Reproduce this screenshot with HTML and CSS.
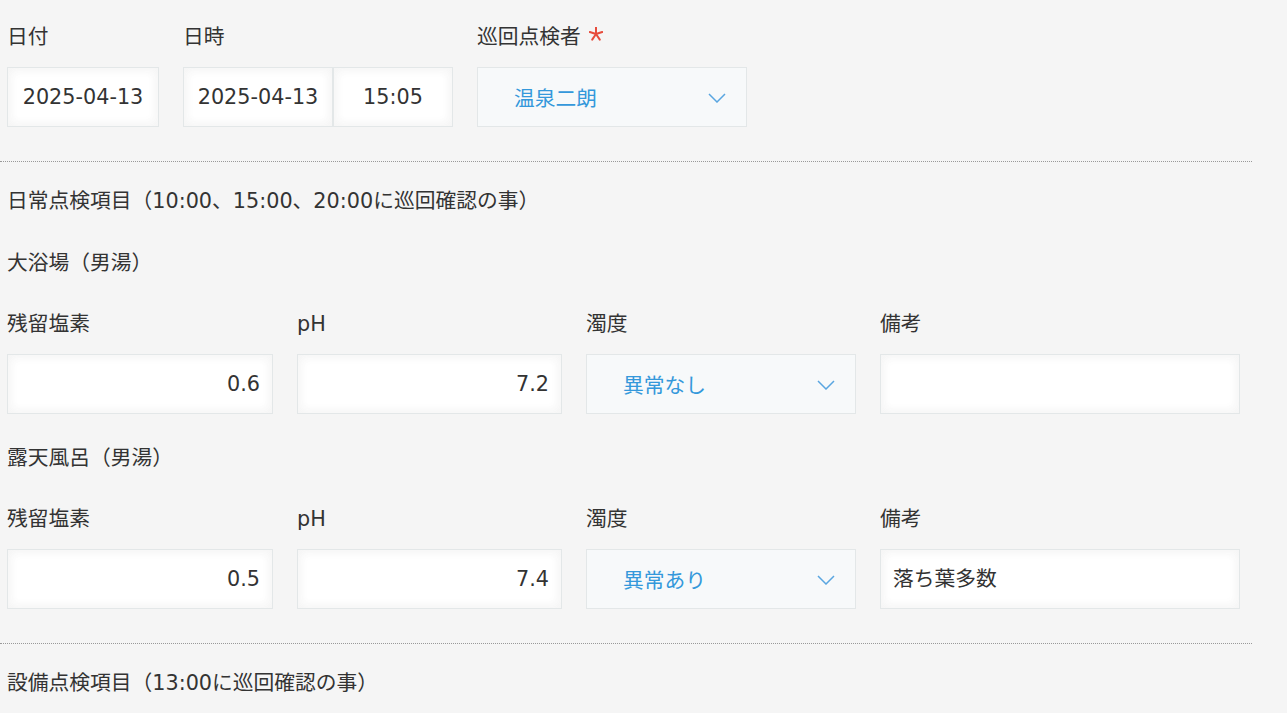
FILE: index.html
```html
<!DOCTYPE html>
<html lang="ja">

<head>
  <meta charset="UTF-8">
  <meta name="viewport" content="width=device-width, initial-scale=1.0">
  <title>巡回点検</title>
  <link rel="stylesheet" href="styles.css">
</head>

<body>
  <div class="form">

    <div class="row row--top">
      <div class="field">
        <div class="label">日付</div>
        <div class="input input--date input--center">2025-04-13</div>
      </div>
      <div class="field">
        <div class="label">日時</div>
        <div class="datetime">
          <div class="input input--date2 input--center">2025-04-13</div>
          <div class="input input--time input--center">15:05</div>
        </div>
      </div>
      <div class="field">
        <div class="label">巡回点検者 <span class="required"><svg width="14" height="14" viewBox="0 0 14 14"><g stroke="#e74c3c" stroke-width="2" stroke-linecap="round"><line x1="7" y1="7" x2="7" y2="0.5"/><line x1="7" y1="7" x2="13.2" y2="5"/><line x1="7" y1="7" x2="0.8" y2="5"/><line x1="7" y1="7" x2="10.8" y2="12.6"/><line x1="7" y1="7" x2="3.2" y2="12.6"/></g></svg></span></div>
        <div class="select">
          <span class="select__text">温泉二朗</span>
          <svg class="select__arrow" width="18" height="10" viewBox="0 0 18 10"><polyline points="1,1 9,9 17,1" fill="none" stroke="#5aa6e0" stroke-width="1.5"/></svg>
        </div>
      </div>
    </div>

    <hr class="rule">

    <div class="group-title">日常点検項目（10:00、15:00、20:00に巡回確認の事）</div>

    <div class="sub-title">大浴場（男湯）</div>
    <div class="row">
      <div class="field">
        <div class="label">残留塩素</div>
        <div class="input input--num">0.6</div>
      </div>
      <div class="field">
        <div class="label">pH</div>
        <div class="input input--num input--ph">7.2</div>
      </div>
      <div class="field">
        <div class="label">濁度</div>
        <div class="select">
          <span class="select__text">異常なし</span>
          <svg class="select__arrow" width="18" height="10" viewBox="0 0 18 10"><polyline points="1,1 9,9 17,1" fill="none" stroke="#5aa6e0" stroke-width="1.5"/></svg>
        </div>
      </div>
      <div class="field">
        <div class="label">備考</div>
        <div class="input input--note"></div>
      </div>
    </div>

    <div class="sub-title sub-title--second">露天風呂（男湯）</div>
    <div class="row">
      <div class="field">
        <div class="label">残留塩素</div>
        <div class="input input--num">0.5</div>
      </div>
      <div class="field">
        <div class="label">pH</div>
        <div class="input input--num input--ph">7.4</div>
      </div>
      <div class="field">
        <div class="label">濁度</div>
        <div class="select">
          <span class="select__text">異常あり</span>
          <svg class="select__arrow" width="18" height="10" viewBox="0 0 18 10"><polyline points="1,1 9,9 17,1" fill="none" stroke="#5aa6e0" stroke-width="1.5"/></svg>
        </div>
      </div>
      <div class="field">
        <div class="label">備考</div>
        <div class="input input--note">落ち葉多数</div>
      </div>
    </div>

    <hr class="rule">

    <div class="group-title">設備点検項目（13:00に巡回確認の事）</div>

  </div>
</body>

</html>
```

FILE: styles.css
```css
body {
  margin: 0;
  background-color: #f5f5f5;
  color: #333;
  font-family: "DejaVu Sans", "Noto Sans CJK JP", sans-serif;
  font-size: 20.75px;
}

.form {
  padding-top: 23px;
}

/* 1行分のフィールド */
.row {
  display: flex;
  gap: 24px;
  padding-left: 7px;
  margin-top: 33px;
}

.row--top {
  margin-top: 0;
}

.field {
  display: flex;
  flex-direction: column;
}

.label {
  display: flex;
  align-items: center;
  height: 28px;
  line-height: 28px;
  margin-bottom: 16px;
}

.required {
  display: inline-flex;
  margin-left: 8px;
  margin-top: -7px;
}

/* 入力欄 */
.input {
  box-sizing: border-box;
  height: 60px;
  line-height: 58px;
  padding: 0 12px;
  background-color: #fff;
  border: 1px solid #e3e7e8;
  box-shadow: 1px 1px 12px #f5f5f5 inset, -1px -1px 12px #f5f5f5 inset;
  white-space: nowrap;
}

.input--center {
  text-align: center;
  padding: 0;
}

.input--date {
  width: 152px;
}

.datetime {
  display: flex;
}

.input--date2 {
  width: 150px;
}

.input--time {
  width: 120px;
}

.input--num {
  width: 266px;
  text-align: right;
}

.input--ph {
  width: 265px;
}

.input--note {
  width: 360px;
}

/* ドロップダウン */
.select {
  box-sizing: border-box;
  display: flex;
  align-items: center;
  justify-content: space-between;
  width: 270px;
  height: 60px;
  padding: 0 20px 0 36px;
  background-color: #f7f9fa;
  border: 1px solid #e3e7e8;
  color: #3498db;
}

.select__arrow {
  margin-top: 1px;
}

.rule {
  width: 1252px;
  margin: 34px 0 0;
  border: 0;
  border-top: 1px dotted #999;
}

.group-title {
  margin-top: 25px;
  padding-left: 7px;
  line-height: 28px;
}

.sub-title {
  margin-top: 34px;
  padding-left: 7px;
  line-height: 28px;
}

.sub-title--second {
  margin-top: 30px;
}
```
